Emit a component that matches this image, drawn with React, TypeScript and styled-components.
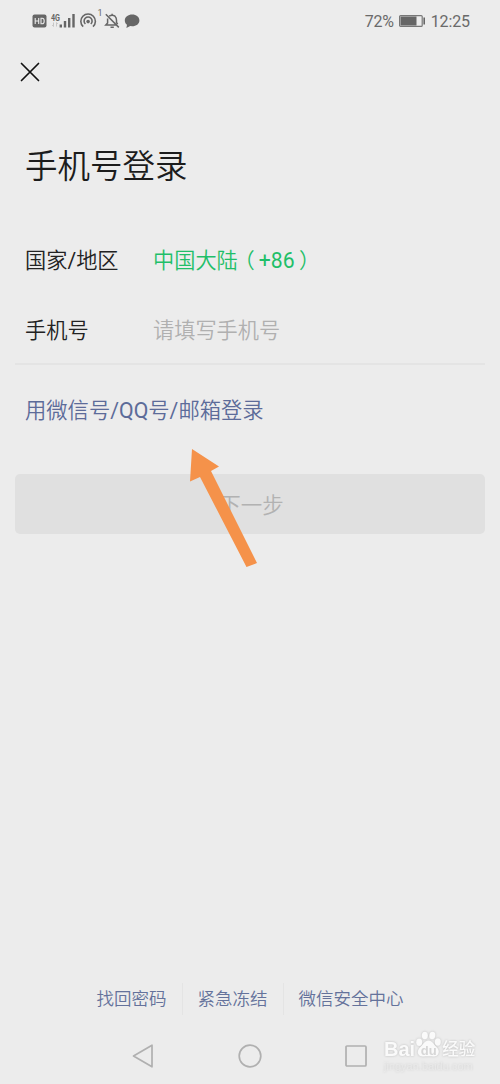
import React from 'react';
import styled, { createGlobalStyle } from 'styled-components';

const Global = createGlobalStyle`
  * { box-sizing: border-box; }
  body {
    margin: 0;
    background: #ececec;
    font-family: Roboto, "Noto Sans CJK SC", sans-serif;
    font-weight: 350;
  }
`;

const Screen = styled.main`
  position: relative;
  display: flex;
  flex-direction: column;
  width: 500px;
  height: 1084px;
  overflow: hidden;
  background: #ececec;
`;

const StatusBar = styled.header`
  display: flex;
  justify-content: space-between;
  align-items: center;
  height: 42px;
  padding: 0 30px 0 32px;
  color: #6a6a6a;
  font-size: 16px;
  font-weight: 400;
`;

const StatusGroup = styled.div`
  display: flex;
  align-items: center;
`;

const Percent = styled.span`
  width: 33px;
  letter-spacing: -0.2px;
`;

const Clock = styled.span`
  margin-left: 5px;
  letter-spacing: -0.1px;
`;

const TopBar = styled.div`
  display: flex;
  align-items: center;
  height: 60px;
  padding-left: 20px;
`;

const CloseButton = styled.button`
  display: flex;
  padding: 0;
  border: 0;
  background: none;
`;

const Title = styled.h1`
  margin: 41px 0 0 25px;
  font-size: 32.5px;
  line-height: 48px;
  font-weight: 350;
  color: #1c1c1c;
`;

const Form = styled.section`
  display: flex;
  flex-direction: column;
  margin: 32px 15px 0;
  border-bottom: 2px solid #e4e4e4;
`;

const Row = styled.div`
  display: flex;
  align-items: center;
  height: 70px;
  padding: 1px 0 0 10px;
  font-size: 21.2px;
`;

const Label = styled.span`
  width: 128px;
  color: #222;
`;

const Value = styled.span<{ $placeholder?: boolean }>`
  color: ${(p) => (p.$placeholder ? '#b0b0b0' : '#1fbf69')};
`;

const Latin = styled.span`
  font-weight: 400;
`;

const OpenParen = styled.span`
  margin: 0 4px 0 6.4px;
  font-feature-settings: "halt";
`;

const CloseParen = styled.span`
  margin-left: 4.5px;
  font-feature-settings: "halt";
`;

const ModeLink = styled.a`
  margin: 30px 0 0 25px;
  font-size: 21.3px;
  line-height: 32px;
  color: #5c6b99;
`;

const NextButton = styled.button`
  height: 60px;
  margin: 47px 15px 0;
  padding: 0 0 2px 3px;
  border: 0;
  border-radius: 5px;
  background: #e0e0e0;
  color: #b2b2b2;
  font: 350 21.5px Roboto, "Noto Sans CJK SC", sans-serif;
`;

const Footer = styled.nav`
  display: flex;
  justify-content: center;
  align-items: center;
  height: 32px;
  margin-top: auto;
`;

const FooterLink = styled.a`
  padding: 0 15px;
  font-size: 17.5px;
  line-height: 32px;
  color: #64729b;
  & + & { border-left: 1px solid #e4e4e4; }
`;

const SystemNav = styled.div`
  display: flex;
  align-items: center;
  height: 56px;
  margin-top: 13px;
  padding-left: 131px;
`;

const NavIcon = styled.svg`
  width: 24px;
  height: 24px;
  margin-right: 82.5px;
  fill: none;
  stroke: #b0b0b0;
  stroke-width: 1.7;
  stroke-linejoin: round;
`;

const Pointer = styled.svg`
  position: absolute;
  left: 185px;
  top: 444px;
`;

const Watermark = styled.div`
  position: absolute;
  left: 384px;
  top: 1028px;
  width: 96px;
  color: #fafafa;
  filter: drop-shadow(0 0 0.8px #bcbcbc);
`;

const Brand = styled.div`
  display: flex;
  align-items: flex-end;
  height: 32px;
  font: 700 20px/21px "Liberation Sans", "Noto Sans CJK SC", sans-serif;
`;

const BrandSuffix = styled.span`
  font-size: 16.5px;
  font-weight: 500;
`;

const Domain = styled.div`
  font: 400 11px/12px "Liberation Sans", sans-serif;
  color: #eeeeee;
  opacity: 0.6;
`;

const StatusIcons = () => (
  <svg width="110" height="30" viewBox="32 6 110 30" fill="none" stroke="#666">
    <rect x="32.5" y="14.5" width="14" height="13" rx="2" fill="#666" stroke="none" />
    <path d="M35.2 18v6M38.7 18v6M35.2 21h3.5M41 18.2v5.6h1.2q2 0 2-2.8t-2-2.8z" stroke="#ececec" strokeWidth="1.1" />
    <text x="51" y="20.6" fontSize="8.500" fontWeight="700" fill="#666" stroke="none" textLength="9" lengthAdjust="spacingAndGlyphs">4G</text>
    <path d="M53.5 22.5v4m-1.4-1.4 1.4 1.4M56.5 26.5v-4m1.3 1.4-1.3-1.4" stroke="#c2c2c2" strokeWidth=".9" />
    <path d="M60.8 27.5v-3M65 27.5v-6.500M69.200 27.5v-9.5M73.500 27.5v-13.5" strokeWidth="2.4" />
    <path d="M83.2 26.7a7.3 7.3 0 1 1 9.8 0M85.4 24a4 4 0 1 1 5.4 0" strokeWidth="1.6" />
    <circle cx="88.1" cy="21.6" r="1.8" fill="#666" stroke="none" />
    <text x="97.5" y="15.5" fontSize="9" fill="#666" stroke="none">1</text>
    <path d="M109.2 16.2q3-2 5.8 0 1.5 1.3 1.5 4v2.2l1.2 1.8M107.6 18.5v4.5l-1.8 2h10.7M110.5 27.3h3.3M112.1 15v-1.3M105.8 14.2l13 13.2" strokeWidth="1.5" />
    <path d="M132.2 14.5c4.1 0 7.2 2.6 7.2 5.9s-3.1 5.8-7.2 5.8l-2-.2-3.8 2 .6-3.2c-1.4-1-2.2-2.6-2.2-4.4 0-3.3 3.3-5.9 7.4-5.9z" fill="#666" stroke="none" />
  </svg>
);

const Battery = () => (
  <svg width="28" height="14" viewBox="0 0 28 14">
    <rect x="1.6" y="1.6" width="22.6" height="10.8" rx="1" fill="none" stroke="#777" strokeWidth="1.2" />
    <rect x="2.500" y="2.5" width="16" height="9" fill="#666" />
    <rect x="25.4" y="3.5" width="1.6" height="7" fill="#666" />
  </svg>
);

const Paw = () => (
  <svg width="27" height="31" viewBox="0 0 26 31" fill="#fafafa">
    <ellipse cx="3.7" cy="13.2" rx="3" ry="3.7" />
    <ellipse cx="9.3" cy="6.5" rx="3" ry="3.8" />
    <ellipse cx="16.8" cy="6.5" rx="3" ry="3.8" transform="rotate(10 16.8 6.5)" />
    <ellipse cx="22.3" cy="13" rx="3" ry="3.7" />
    <path d="M13 11.5c4 0 5 4 8 6.5 5 5 1 10-3 9.5-3-.5-7-.5-10 0-5 .7-8-4.500-3.500-9 3-3 4.500-7 8.500-7z" />
    <text x="5.300" y="25.5" fontSize="13" fontWeight="700" fill="#d6d6d6">du</text>
  </svg>
);

export default function App() {
  return (
    <>
      <Global />
      <Screen>
        <StatusBar>
          <StatusIcons />
          <StatusGroup>
            <Percent>72%</Percent>
            <Battery />
            <Clock>12:25</Clock>
          </StatusGroup>
        </StatusBar>
        <TopBar>
          <CloseButton aria-label="关闭">
            <svg width="20" height="20" viewBox="0 0 20 20" stroke="#111" strokeWidth="1.7" strokeLinecap="round">
              <path d="M1.5 1.5l17 17M18.5 1.5l-17 17" />
            </svg>
          </CloseButton>
        </TopBar>
        <Title>手机号登录</Title>
        <Form>
          <Row>
            <Label>国家<Latin>/</Latin>地区</Label>
            <Value>中国大陆<OpenParen>（</OpenParen><Latin>+86</Latin><CloseParen>）</CloseParen></Value>
          </Row>
          <Row>
            <Label>手机号</Label>
            <Value $placeholder>请填写手机号</Value>
          </Row>
        </Form>
        <ModeLink>用微信号<Latin>/QQ</Latin>号<Latin>/</Latin>邮箱登录</ModeLink>
        <NextButton>下一步</NextButton>
        <Footer>
          <FooterLink>找回密码</FooterLink>
          <FooterLink>紧急冻结</FooterLink>
          <FooterLink>微信安全中心</FooterLink>
        </Footer>
        <SystemNav>
          <NavIcon viewBox="0 0 24 24"><path d="M2.5 12 21 1.2v21.6z" /></NavIcon>
          <NavIcon viewBox="0 0 24 24"><circle cx="12" cy="12" r="10.8" /></NavIcon>
          <NavIcon viewBox="0 0 24 24"><rect x="2" y="2" width="20" height="20" rx="1" /></NavIcon>
        </SystemNav>
        <Pointer width="76" height="126" viewBox="0 0 76 126" fill="#f5924a">
          <path d="M7 5 34 22.5 26 27 72 119 61.5 123 15 33 5 37.5z" />
        </Pointer>
        <Watermark>
          <Brand>
            <span>Bai</span>
            <Paw />
            <BrandSuffix>经验</BrandSuffix>
          </Brand>
          <Domain>jingyan.baidu.com</Domain>
        </Watermark>
      </Screen>
    </>
  );
}
